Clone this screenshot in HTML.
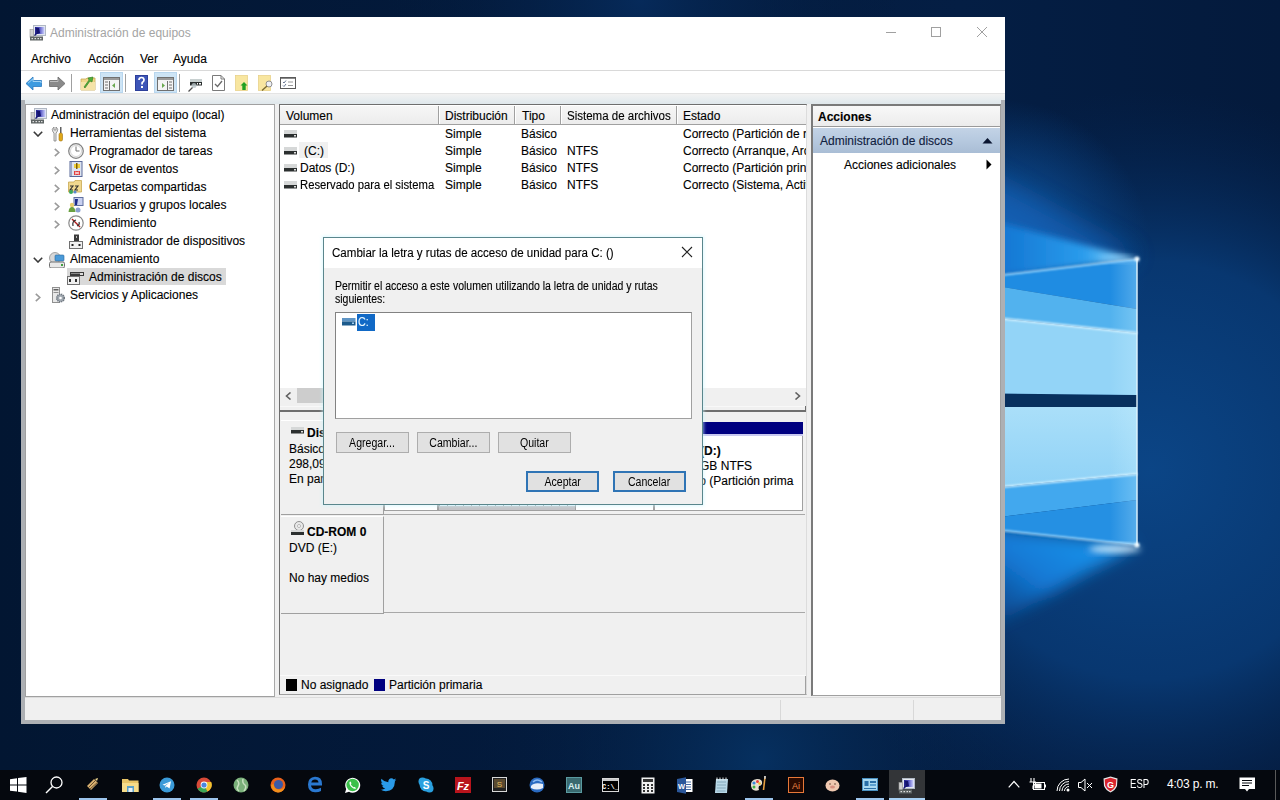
<!DOCTYPE html>
<html><head><meta charset="utf-8">
<style>
*{margin:0;padding:0;box-sizing:border-box}
html,body{width:1280px;height:800px;overflow:hidden;background:#071a3a;font-family:"Liberation Sans",sans-serif;font-size:12px;color:#000}
.a,.t,.b{position:absolute}
.t{white-space:nowrap;line-height:14px;-webkit-text-stroke:0.12px currentColor}
#wall{position:absolute;left:0;top:0}
</style></head><body>
<svg id="wall" width="1280" height="800" viewBox="0 0 1280 800">
<defs>
<radialGradient id="g1" cx="1150" cy="470" r="380" gradientUnits="userSpaceOnUse">
<stop offset="0" stop-color="#0b4586"/><stop offset="0.55" stop-color="#083770"/><stop offset="1" stop-color="#052450" stop-opacity="0"/>
</radialGradient>
<radialGradient id="g4" cx="1000" cy="250" r="150" gradientUnits="userSpaceOnUse">
<stop offset="0" stop-color="#1468be"/><stop offset="0.6" stop-color="#0d4f98" stop-opacity="0.5"/><stop offset="1" stop-color="#0a4a90" stop-opacity="0"/>
</radialGradient>
<radialGradient id="g2" cx="640" cy="0" r="260" gradientUnits="userSpaceOnUse">
<stop offset="0" stop-color="#062a5a"/><stop offset="1" stop-color="#031a3a" stop-opacity="0"/>
</radialGradient>
<radialGradient id="g5" cx="760" cy="760" r="300" gradientUnits="userSpaceOnUse">
<stop offset="0" stop-color="#063060"/><stop offset="1" stop-color="#031a3a" stop-opacity="0"/>
</radialGradient>
<linearGradient id="cone" x1="1100" y1="540" x2="1020" y2="650" gradientUnits="userSpaceOnUse">
<stop offset="0" stop-color="#1c94ec"/><stop offset="0.5" stop-color="#1478d4"/><stop offset="1" stop-color="#0c58a8" stop-opacity="0.3"/>
</linearGradient>
<linearGradient id="base" x1="0" y1="0" x2="1280" y2="0" gradientUnits="userSpaceOnUse">
<stop offset="0" stop-color="#021632"/><stop offset="0.4" stop-color="#031a3c"/><stop offset="0.75" stop-color="#041e44"/><stop offset="1" stop-color="#041a3c"/>
</linearGradient>
<linearGradient id="q1" x1="0" y1="407" x2="0" y2="490" gradientUnits="userSpaceOnUse"><stop offset="0" stop-color="#aadff9"/><stop offset="1" stop-color="#8ed1f6"/></linearGradient>
<linearGradient id="edge" x1="1110" y1="0" x2="1137" y2="0" gradientUnits="userSpaceOnUse"><stop offset="0" stop-color="#c8f0ff" stop-opacity="0"/><stop offset="1" stop-color="#c8f0ff" stop-opacity="0.3"/></linearGradient>
<linearGradient id="beam" x1="1005" y1="0" x2="1137" y2="0" gradientUnits="userSpaceOnUse"><stop offset="0" stop-color="#1478d4"/><stop offset="0.6" stop-color="#2a9cec"/><stop offset="1" stop-color="#a8e4ff"/></linearGradient>
<filter id="bl8" x="-50%" y="-50%" width="200%" height="200%"><feGaussianBlur stdDeviation="8"/></filter>
<filter id="bl3" x="-50%" y="-50%" width="200%" height="200%"><feGaussianBlur stdDeviation="3"/></filter>
<filter id="bl12" x="-50%" y="-50%" width="200%" height="200%"><feGaussianBlur stdDeviation="12"/></filter>
<filter id="bl1" x="-50%" y="-50%" width="200%" height="200%"><feGaussianBlur stdDeviation="0.8"/></filter>
</defs>
<rect width="1280" height="800" fill="url(#base)"/>
<rect width="1280" height="800" fill="url(#g2)"/>
<rect width="1280" height="800" fill="url(#g5)"/>
<rect width="1280" height="800" fill="url(#g1)"/>
<rect width="1280" height="800" fill="url(#g4)"/>
<!-- cone below logo -->
<path d="M1137 545 L950 522 L950 650Z" fill="url(#cone)" filter="url(#bl8)"/>
<!-- ray glow into top corner -->
<path d="M960 160 L1137 256 L960 285Z" fill="#1262b8" opacity="0.7" filter="url(#bl12)"/>
<path d="M960 212 L1137 259 L960 280Z" fill="url(#beam)" filter="url(#bl3)"/>
<!-- panes -->
<path d="M960 393 L1137 395 L1137 407 L960 407Z" fill="#08305e"/>
<path d="M960 280 L1137 259 L1137 309Z" fill="#1f8ce2"/>
<path d="M960 280 L1137 309 L1137 333 L960 314Z" fill="#52b2ee"/>
<path d="M960 314 L1137 333 L1137 395 L960 393Z" fill="#93d4f7"/>
<path d="M960 407 L1137 407 L1137 474 L960 491Z" fill="url(#q1)"/>
<path d="M960 491 L1137 474 L1137 500 L960 522Z" fill="#42a8ee"/>
<path d="M960 522 L1137 500 L1137 545 L960 526Z" fill="#2590e3"/>
<!-- streaks -->
<path d="M960 280 L1137 259" stroke="#bfe8ff" stroke-width="1.4" filter="url(#bl1)"/>
<path d="M960 314 L1137 333" stroke="#e0f6ff" stroke-width="1.8" filter="url(#bl1)"/>
<path d="M960 491 L1137 474" stroke="#e0f6ff" stroke-width="1.8" filter="url(#bl1)"/>
<path d="M960 526 L1137 545" stroke="#bfe8ff" stroke-width="1.4" filter="url(#bl1)"/>
<path d="M1137 259 L1137 545" stroke="#e8f8ff" stroke-width="1.4"/>
<path d="M1137 259 L1137 545" stroke="#6cc8ff" stroke-width="4" opacity="0.6" filter="url(#bl3)"/>
<path d="M1110 262 L1137 259 L1137 395 L1110 395Z" fill="url(#edge)"/><path d="M1110 407 L1137 407 L1137 545 L1110 542Z" fill="url(#edge)"/>
<circle cx="1137" cy="259" r="2.5" fill="#f4fcff" filter="url(#bl1)"/>
<circle cx="1137" cy="545" r="2.5" fill="#f4fcff" filter="url(#bl1)"/>
<ellipse cx="1115" cy="549" rx="26" ry="4" fill="#e0f4ff" opacity="0.8" filter="url(#bl3)"/>
<ellipse cx="1118" cy="259" rx="20" ry="3" fill="#a0d8ff" opacity="0.4" filter="url(#bl3)"/>
</svg>

<!-- window frame -->
<div class="a" style="left:21px;top:17px;width:984px;height:707px;background:#adb0b4"></div>
<!-- title+menu+toolbar white -->
<div class="a" style="left:21px;top:17px;width:984px;height:76px;background:#fff"></div>
<div class="a" style="left:21px;top:70px;width:984px;height:1px;background:#d9d9d9"></div>

<!-- title bar -->
<svg class="a" style="left:29px;top:24px" width="17" height="17" viewBox="0 0 17 17"><rect x="4.5" y="1.5" width="12" height="10" fill="#e4e8f0" stroke="#b0b8c4"/><rect x="6" y="3" width="9.5" height="7" fill="url(#scr)"/><path d="M7 4 L10 4 L11 9 L8 10 L6 12 L5 11 L7.5 9Z" fill="#14146e"/><rect x="1" y="5.5" width="3.5" height="8" fill="#d0d0d0" stroke="#9a9a9a" stroke-width="0.6"/><rect x="1" y="12.5" width="13" height="4" fill="#5e6464"/><rect x="2.5" y="14" width="1.5" height="1.2" fill="#e0e0e0"/><rect x="5.5" y="14" width="1.5" height="1.2" fill="#e0e0e0"/><rect x="8.5" y="14" width="1.5" height="1.2" fill="#e0e0e0"/><rect x="11" y="14" width="1.5" height="1.2" fill="#e0e0e0"/></svg>
<div class="t" style="left:50px;top:26px;color:#a4a4a4;font-size:12px;-webkit-text-stroke:0">Administración de equipos</div>
<div class="a" style="left:886px;top:32px;width:10px;height:1px;background:#a0a0a0"></div>
<div class="a" style="left:931px;top:27px;width:10px;height:10px;border:1px solid #a0a0a0"></div>
<svg class="a" style="left:976px;top:26px" width="12" height="12" viewBox="0 0 12 12"><path d="M1 1L11 11M11 1L1 11" stroke="#a0a0a0" stroke-width="1"/></svg>
<!-- menu -->
<div class="t" style="left:31px;top:52px">Archivo</div>
<div class="t" style="left:88px;top:52px">Acción</div>
<div class="t" style="left:140px;top:52px">Ver</div>
<div class="t" style="left:173px;top:52px">Ayuda</div>

<!-- toolbar -->
<svg class="a" style="left:25px;top:76px" width="18" height="15" viewBox="0 0 18 15">
<path d="M1 7.5 L8 1 L8 4.5 L16.5 4.5 L16.5 10.5 L8 10.5 L8 14 Z" fill="#3d9be0" stroke="#2a78c0" stroke-width="0.8"/>
<path d="M3 7.2 L8 2.8 L8 5.5 L16 5.5 L16 7" fill="none" stroke="#9fd3f5" stroke-width="1"/>
</svg>
<svg class="a" style="left:48px;top:76px" width="18" height="15" viewBox="0 0 18 15">
<path d="M17 7.5 L10 1 L10 4.5 L1.5 4.5 L1.5 10.5 L10 10.5 L10 14 Z" fill="#8a8a8a" stroke="#6a6a6a" stroke-width="0.8"/>
<path d="M2 5.5 L10 5.5 L10 3" fill="none" stroke="#bdbdbd" stroke-width="1"/>
</svg>
<div class="a" style="left:71px;top:74px;width:1px;height:18px;background:#a0a0a0"></div>
<svg class="a" style="left:80px;top:75px" width="16" height="16" viewBox="0 0 16 16">
<path d="M1 4 L6 4 L7 3 L15 3 L15 15 L1 15Z" fill="#f0d68a" stroke="#c8a850" stroke-width="0.8"/>
<path d="M1 7 L15 7 L15 15 L1 15Z" fill="#f5e3a8"/>
<path d="M4 12 L9 5 L8 3 L13 2 L12 7 L10 6 L5 13Z" fill="#4fae3a" stroke="#2f7a20" stroke-width="0.6"/>
</svg>
<div class="a" style="left:100px;top:72px;width:23px;height:21px;background:#cde4f5;border:1px solid #b8d6ee"></div>
<svg class="a" style="left:103px;top:77px" width="17" height="14" viewBox="0 0 17 14">
<rect x="0.5" y="0.5" width="16" height="13" fill="#f4f4f4" stroke="#707070"/>
<rect x="1" y="1" width="15" height="2" fill="#9a9a9a"/>
<path d="M2 5h3M2 8h3M2 11h3" stroke="#707070"/>
<path d="M6.5 4v9" stroke="#707070"/>
<path d="M12 6 L9 8.5 L12 11Z" fill="#6aa84f"/>
</svg>
<div class="a" style="left:125px;top:74px;width:1px;height:18px;background:#a0a0a0"></div>
<svg class="a" style="left:135px;top:75px" width="13" height="16" viewBox="0 0 13 16">
<rect x="0" y="0" width="13" height="16" fill="#2d3f9a"/>
<rect x="1" y="1" width="11" height="14" fill="#3d55b8"/>
<path d="M4 5 Q4 2.5 6.5 2.5 Q9 2.5 9 5 Q9 6.5 7.2 7.5 L7 9.5" fill="none" stroke="#fff" stroke-width="1.7"/>
<rect x="6" y="11" width="2" height="2" fill="#fff"/>
</svg>
<div class="a" style="left:154px;top:72px;width:23px;height:21px;background:#cde4f5;border:1px solid #b8d6ee"></div>
<svg class="a" style="left:157px;top:77px" width="17" height="14" viewBox="0 0 17 14">
<rect x="0.5" y="0.5" width="16" height="13" fill="#f4f4f4" stroke="#707070"/>
<rect x="1" y="1" width="15" height="2" fill="#9a9a9a"/>
<path d="M12 5h3M12 8h3M12 11h3" stroke="#707070"/>
<path d="M10.5 4v9" stroke="#707070"/>
<path d="M5 6 L8 8.5 L5 11Z" fill="#6aa84f"/>
</svg>
<div class="a" style="left:179px;top:74px;width:1px;height:18px;background:#a0a0a0"></div>
<svg class="a" style="left:188px;top:78px" width="15" height="14" viewBox="0 0 15 14"><rect x="2" y="1" width="12" height="3" fill="#c8d0d0"/><rect x="2" y="4" width="12" height="3.5" fill="#2a2e2e"/><rect x="9" y="5" width="1" height="1.5" fill="#fff"/><rect x="11" y="5" width="2" height="1.5" fill="#fff"/><circle cx="6" cy="7.5" r="2.5" fill="#b8c4c8" opacity="0.8"/><path d="M4.5 9.5 L0.5 13.5" stroke="#505050" stroke-width="1.3"/></svg>
<svg class="a" style="left:212px;top:75px" width="13" height="16" viewBox="0 0 13 16">
<path d="M0.5 0.5 L9 0.5 L12.5 4 L12.5 15.5 L0.5 15.5Z" fill="#fff" stroke="#7a7a7a"/>
<path d="M9 0.5 L9 4 L12.5 4" fill="none" stroke="#7a7a7a"/>
<path d="M3 9 L5.5 11.5 L10 6" fill="none" stroke="#6a6a6a" stroke-width="1.3"/>
</svg>
<svg class="a" style="left:235px;top:75px" width="14" height="16" viewBox="0 0 14 16">
<rect x="0.5" y="0.5" width="12" height="15" fill="#f8e6a0" stroke="#e8d28a" stroke-width="0.8"/>
<path d="M9 7 L12.5 10.5 L10.7 10.5 L10.7 15 L7.3 15 L7.3 10.5 L5.5 10.5Z" fill="#22a022"/>
</svg>
<svg class="a" style="left:258px;top:75px" width="16" height="16" viewBox="0 0 16 16">
<rect x="0.5" y="0.5" width="12" height="15" fill="#f8e6a0" stroke="#e8d28a" stroke-width="0.8"/>
<circle cx="11" cy="9" r="3" fill="#eef0f4" stroke="#909090"/>
<path d="M9 11 L4 15.5" stroke="#7a6a30" stroke-width="1.4"/>
</svg>
<svg class="a" style="left:280px;top:77px" width="16" height="12" viewBox="0 0 16 12">
<rect x="0.5" y="0.5" width="15" height="11" fill="#fff" stroke="#5a5a5a"/>
<rect x="1" y="1" width="14" height="1" fill="#8a8a8a"/>
<path d="M3 5 L4 6 L6 3.5M3 8.5 L4 9.5 L6 7" fill="none" stroke="#5a6a8a" stroke-width="0.9"/>
<path d="M8 5h5M8 8.5h5" stroke="#9a9a9a"/>
</svg>
<!-- gradient band -->
<div class="a" style="left:21px;top:93px;width:984px;height:7px;background:linear-gradient(#f2f2f2,#e6ecef);border-top:1px solid #e4e4e4"></div><div class="a" style="left:25px;top:100px;width:976px;height:4px;background:linear-gradient(#e6ecef,#dfe7eb)"></div>
<!-- between-panels fill -->
<div class="a" style="left:25px;top:104px;width:976px;height:593px;background:#f0f0f0"></div>
<!-- status bar -->
<div class="a" style="left:25px;top:697px;width:976px;height:23px;background:#f0f0f0;border-top:1px solid #dcdcdc"></div>
<div class="a" style="left:780px;top:700px;width:1px;height:20px;background:#d8d8d8"></div>
<div class="a" style="left:913px;top:700px;width:1px;height:20px;background:#d8d8d8"></div>

<!-- left panel -->
<div class="a" style="left:25px;top:104px;width:250px;height:593px;background:#fff;border:1px solid #a0a0a0;border-right-color:#a8a8a8"></div>
<!-- tree -->
<div class="a" style="left:67px;top:268px;width:159px;height:17px;background:#d9d9d9"></div>
<svg class="a" style="left:30px;top:107px" width="17" height="17" viewBox="0 0 17 17"><defs><linearGradient id="scr" x1="0" y1="0" x2="1" y2="0"><stop offset="0" stop-color="#20208a"/><stop offset="0.45" stop-color="#5050c0"/><stop offset="1" stop-color="#d0d4ff"/></linearGradient></defs><rect x="4.5" y="1.5" width="12" height="10" fill="#e4e8f0" stroke="#b0b8c4"/><rect x="6" y="3" width="9.5" height="7" fill="url(#scr)"/><path d="M7 4 L10 4 L11 9 L8 10 L6 12 L5 11 L7.5 9Z" fill="#14146e"/><rect x="1" y="5.5" width="3.5" height="8" fill="#d0d0d0" stroke="#9a9a9a" stroke-width="0.6"/><rect x="1" y="12.5" width="13" height="4" fill="#5e6464"/><rect x="2.5" y="14" width="1.5" height="1.2" fill="#e0e0e0"/><rect x="5.5" y="14" width="1.5" height="1.2" fill="#e0e0e0"/><rect x="8.5" y="14" width="1.5" height="1.2" fill="#e0e0e0"/><rect x="11" y="14" width="1.5" height="1.2" fill="#e0e0e0"/></svg><div class="t" style="left:51px;top:108px;">Administración del equipo (local)</div>
<svg class="a" style="left:33px;top:131px" width="10" height="6" viewBox="0 0 10 6"><path d="M0.8 0.8 L5 5 L9.2 0.8" fill="none" stroke="#3a3a3a" stroke-width="1.6"/></svg><svg class="a" style="left:51px;top:126px" width="13" height="16" viewBox="0 0 13 16"><path d="M3 1 Q0 3 2 6 L3 7 L3 15 L5 15 L5 7 L6 6 Q8 3 5 1 L5 4 L3 4Z" fill="#e8e8e8" stroke="#808080" stroke-width="0.8"/><rect x="9" y="1" width="1.5" height="6" fill="#606060"/><rect x="8" y="7" width="3.5" height="8" rx="1.5" fill="#e0a818" stroke="#a07010" stroke-width="0.6"/></svg><div class="t" style="left:70px;top:126px;">Herramientas del sistema</div>
<svg class="a" style="left:54px;top:148px" width="6" height="9" viewBox="0 0 6 9"><path d="M0.8 0.8 L4.8 4.5 L0.8 8.2" fill="none" stroke="#9a9a9a" stroke-width="1.6"/></svg><svg class="a" style="left:68px;top:143px" width="16" height="16" viewBox="0 0 16 16"><circle cx="8" cy="8" r="7.3" fill="#f4f4f4" stroke="#808080" stroke-width="1.2"/><circle cx="8" cy="8" r="5.5" fill="#fff" stroke="#c0c0c0" stroke-width="0.6"/><path d="M8 3.5 L8 8 L11.5 8" fill="none" stroke="#707070" stroke-width="1"/></svg><div class="t" style="left:89px;top:144px;">Programador de tareas</div>
<svg class="a" style="left:54px;top:166px" width="6" height="9" viewBox="0 0 6 9"><path d="M0.8 0.8 L4.8 4.5 L0.8 8.2" fill="none" stroke="#9a9a9a" stroke-width="1.6"/></svg><svg class="a" style="left:68px;top:161px" width="16" height="16" viewBox="0 0 16 16"><rect x="2" y="0.5" width="12" height="15" fill="#dde4f0" stroke="#5a6a9a"/><path d="M3 2h1M3 4h1M3 6h1M3 8h1M3 10h1M3 12h1M3 14h1" stroke="#5a6a9a"/><rect x="6" y="3" width="6" height="4" fill="#f0d040"/><rect x="8" y="2" width="1.5" height="6" fill="#806000"/><rect x="6" y="10" width="6" height="4" fill="#e04040"/><path d="M7 11 L11 13M11 11 L7 13" stroke="#fff" stroke-width="0.8"/></svg><div class="t" style="left:89px;top:162px;">Visor de eventos</div>
<svg class="a" style="left:54px;top:184px" width="6" height="9" viewBox="0 0 6 9"><path d="M0.8 0.8 L4.8 4.5 L0.8 8.2" fill="none" stroke="#9a9a9a" stroke-width="1.6"/></svg><svg class="a" style="left:68px;top:179px" width="16" height="16" viewBox="0 0 16 16"><path d="M0.5 3 L6 3 L7 1.5 L13.5 1.5 L13.5 13 L0.5 13Z" fill="#f0d890" stroke="#c8a850" stroke-width="0.8"/><path d="M2 7 h3 l-3 4 h3 M7 7 h3 l-3 4 h3" fill="none" stroke="#303030" stroke-width="1.1"/><circle cx="3" cy="13" r="2" fill="#3aaa5a"/><circle cx="7" cy="13" r="1.6" fill="#5a8ad0"/></svg><div class="t" style="left:89px;top:180px;">Carpetas compartidas</div>
<svg class="a" style="left:54px;top:202px" width="6" height="9" viewBox="0 0 6 9"><path d="M0.8 0.8 L4.8 4.5 L0.8 8.2" fill="none" stroke="#9a9a9a" stroke-width="1.6"/></svg><svg class="a" style="left:68px;top:197px" width="16" height="16" viewBox="0 0 16 16"><rect x="6" y="0.5" width="9" height="8" fill="#c8d0f0" stroke="#6070a0"/><path d="M7 2 L10 2 L9 8 L7 8Z" fill="#1a2a8a"/><circle cx="4" cy="8" r="2.2" fill="#e8d070"/><path d="M0.5 15 Q1 10 4 10 Q7 10 7.5 15Z" fill="#6aa040"/><circle cx="10" cy="13" r="2.5" fill="#8aa0d0"/></svg><div class="t" style="left:89px;top:198px;">Usuarios y grupos locales</div>
<svg class="a" style="left:54px;top:220px" width="6" height="9" viewBox="0 0 6 9"><path d="M0.8 0.8 L4.8 4.5 L0.8 8.2" fill="none" stroke="#9a9a9a" stroke-width="1.6"/></svg><svg class="a" style="left:68px;top:215px" width="16" height="16" viewBox="0 0 16 16"><circle cx="8" cy="8" r="7.2" fill="#fff" stroke="#8a8a8a" stroke-width="1.2"/><path d="M4 4 L12 12" stroke="#b02020" stroke-width="1.5"/><path d="M5 11 Q4 6 8 5 M9 11 Q12 10 11 7" fill="none" stroke="#303030" stroke-width="1.2"/></svg><div class="t" style="left:89px;top:216px;">Rendimiento</div>
<svg class="a" style="left:69px;top:234px" width="14" height="15" viewBox="0 0 14 15"><rect x="5" y="0.5" width="5" height="7" fill="#3a3a3a"/><rect x="7" y="2" width="1" height="2" fill="#bbb"/><rect x="0.5" y="7.5" width="13" height="7" fill="#f0f0f0" stroke="#707070"/><rect x="2.5" y="10" width="2" height="2" fill="#202020"/><rect x="9.5" y="10" width="2" height="2" fill="#202020"/></svg><div class="t" style="left:89px;top:234px;">Administrador de dispositivos</div>
<svg class="a" style="left:33px;top:257px" width="10" height="6" viewBox="0 0 10 6"><path d="M0.8 0.8 L5 5 L9.2 0.8" fill="none" stroke="#3a3a3a" stroke-width="1.6"/></svg><svg class="a" style="left:49px;top:252px" width="16" height="16" viewBox="0 0 16 16"><circle cx="6" cy="6" r="5.5" fill="#d8d8d8" stroke="#909090" stroke-width="0.8"/><rect x="6" y="3" width="9" height="6" rx="1" fill="#4a9ad8" stroke="#2a6aa0" stroke-width="0.6"/><rect x="0.5" y="10" width="15" height="6" rx="1.5" fill="#e8e8e8" stroke="#707070"/><rect x="12" y="12" width="2" height="2" fill="#40a040"/></svg><div class="t" style="left:70px;top:252px;">Almacenamiento</div>
<svg class="a" style="left:67px;top:269px" width="18" height="17" viewBox="0 0 18 17"><rect x="3" y="3" width="14" height="4" fill="#3a3a3a"/><rect x="4" y="4" width="10" height="1" fill="#8a8a8a"/><rect x="13" y="4" width="3" height="2" fill="#ddd"/><rect x="0.5" y="7.5" width="12" height="8" fill="#f0f0f0" stroke="#707070"/><rect x="2" y="10" width="2" height="3" fill="#303030"/><rect x="8" y="10" width="2" height="3" fill="#303030"/></svg><div class="t" style="left:89px;top:270px;">Administración de discos</div>
<svg class="a" style="left:35px;top:293px" width="6" height="9" viewBox="0 0 6 9"><path d="M0.8 0.8 L4.8 4.5 L0.8 8.2" fill="none" stroke="#9a9a9a" stroke-width="1.6"/></svg><svg class="a" style="left:50px;top:287px" width="15" height="16" viewBox="0 0 15 16"><rect x="2.5" y="0.5" width="7" height="15" fill="#e8e8e8" stroke="#909090"/><rect x="3.5" y="2" width="5" height="1.5" fill="#606060"/><rect x="3.5" y="5" width="5" height="1" fill="#909090"/><circle cx="10.5" cy="11" r="3.8" fill="#a0a8b0" stroke="#707880" stroke-dasharray="1.2 0.8" stroke-width="1.6"/><circle cx="10.5" cy="11" r="1.3" fill="#fff"/></svg><div class="t" style="left:70px;top:288px;">Servicios y Aplicaciones</div>
<!-- middle panel -->
<div class="a" style="left:279px;top:104px;width:528px;height:591px;background:#f0f0f0;border:1px solid #a0a0a0;border-right-color:#dcdcdc;border-left:1px solid #6e6e6e;border-top:2px solid #6e6e6e"></div><div class="a" style="left:805px;top:675px;width:1px;height:20px;background:#a0a0a0"></div>
<!-- list view -->
<div class="a" style="left:280px;top:105px;width:526px;height:306px;background:#fff"></div>
<div class="a" style="left:280px;top:106px;width:526px;height:19px;background:linear-gradient(#f6f6f6,#ececec);border-bottom:1px solid #a0a0a0"></div>
<div class="a" style="left:438px;top:106px;width:1px;height:18px;background:#a0a0a0"></div><div class="a" style="left:439px;top:106px;width:1px;height:18px;background:#fff"></div>
<div class="a" style="left:514px;top:106px;width:1px;height:18px;background:#a0a0a0"></div><div class="a" style="left:515px;top:106px;width:1px;height:18px;background:#fff"></div>
<div class="a" style="left:560px;top:106px;width:1px;height:18px;background:#a0a0a0"></div><div class="a" style="left:561px;top:106px;width:1px;height:18px;background:#fff"></div>
<div class="a" style="left:676px;top:106px;width:1px;height:18px;background:#a0a0a0"></div><div class="a" style="left:677px;top:106px;width:1px;height:18px;background:#fff"></div>
<div class="t" style="left:286px;top:109px;">Volumen</div>
<div class="t" style="left:445px;top:109px;">Distribución</div>
<div class="t" style="left:522px;top:109px;">Tipo</div>
<div class="t" style="left:567px;top:109px;transform:scaleX(0.96);transform-origin:0 0">Sistema de archivos</div>
<div class="t" style="left:683px;top:109px;">Estado</div>
<div class="a" style="left:299px;top:142px;width:29px;height:16px;background:#f0f0f0"></div>
<div class="a" style="left:280px;top:126px;width:526px;height:262px;overflow:hidden">
<svg class="a" style="left:4px;top:4px" width="13" height="8" viewBox="0 0 13 8"><rect x="0" y="0" width="13" height="4" fill="#d6d8d8"/><rect x="0" y="4" width="13" height="3.5" fill="#2b2f2f"/><rect x="10" y="5" width="2" height="1.5" fill="#e0e0e0"/></svg><div class="t" style="left:165px;top:1px;">Simple</div><div class="t" style="left:241px;top:1px;">Básico</div><div class="t" style="left:403px;top:1px;">Correcto (Partición de r</div>
<svg class="a" style="left:4px;top:21px" width="13" height="8" viewBox="0 0 13 8"><rect x="0" y="0" width="13" height="4" fill="#d6d8d8"/><rect x="0" y="4" width="13" height="3.5" fill="#2b2f2f"/><rect x="10" y="5" width="2" height="1.5" fill="#e0e0e0"/></svg><div class="t" style="left:24px;top:18px;">(C:)</div><div class="t" style="left:165px;top:18px;">Simple</div><div class="t" style="left:241px;top:18px;">Básico</div><div class="t" style="left:287px;top:18px;">NTFS</div><div class="t" style="left:403px;top:18px;">Correcto (Arranque, Arc</div>
<svg class="a" style="left:4px;top:38px" width="13" height="8" viewBox="0 0 13 8"><rect x="0" y="0" width="13" height="4" fill="#d6d8d8"/><rect x="0" y="4" width="13" height="3.5" fill="#2b2f2f"/><rect x="10" y="5" width="2" height="1.5" fill="#e0e0e0"/></svg><div class="t" style="left:20px;top:35px;">Datos (D:)</div><div class="t" style="left:165px;top:35px;">Simple</div><div class="t" style="left:241px;top:35px;">Básico</div><div class="t" style="left:287px;top:35px;">NTFS</div><div class="t" style="left:403px;top:35px;">Correcto (Partición prin</div>
<svg class="a" style="left:4px;top:55px" width="13" height="8" viewBox="0 0 13 8"><rect x="0" y="0" width="13" height="4" fill="#d6d8d8"/><rect x="0" y="4" width="13" height="3.5" fill="#2b2f2f"/><rect x="10" y="5" width="2" height="1.5" fill="#e0e0e0"/></svg><div class="t" style="left:20px;top:52px;transform:scaleX(0.94);transform-origin:0 0">Reservado para el sistema</div><div class="t" style="left:165px;top:52px;">Simple</div><div class="t" style="left:241px;top:52px;">Básico</div><div class="t" style="left:287px;top:52px;">NTFS</div><div class="t" style="left:403px;top:52px;">Correcto (Sistema, Activ</div>
</div>
<div class="a" style="left:280px;top:388px;width:526px;height:22px;background:#f0f0f0"></div>
<div class="a" style="left:297px;top:388px;width:220px;height:15px;background:#cdcdcd"></div>
<svg class="a" style="left:285px;top:392px" width="7" height="8" viewBox="0 0 7 8"><path d="M5.5 0.5 L1.5 4 L5.5 7.5" fill="none" stroke="#606060" stroke-width="1.6"/></svg>
<svg class="a" style="left:794px;top:392px" width="7" height="8" viewBox="0 0 7 8"><path d="M1.5 0.5 L5.5 4 L1.5 7.5" fill="none" stroke="#606060" stroke-width="1.6"/></svg>
<div class="a" style="left:280px;top:406px;width:526px;height:1px;background:#f8f8f8"></div>
<div class="a" style="left:280px;top:410px;width:526px;height:2px;background:#6e6e6e"></div>
<div class="a" style="left:805px;top:406px;width:1px;height:5px;background:#6e6e6e"></div>
<!-- disk area -->
<div class="a" style="left:281px;top:420px;width:103px;height:95px;background:#f0f0f0;border-right:1px solid #a0a0a0;border-bottom:1px solid #a0a0a0;border-top:1px solid #fff"></div>
<svg class="a" style="left:291px;top:427px" width="14" height="8" viewBox="0 0 14 8"><rect x="0" y="0" width="13" height="3" fill="#d6d8d8"/><rect x="0" y="3" width="13" height="3.5" fill="#2b2f2f"/><rect x="10" y="4" width="2" height="1.5" fill="#e0e0e0"/></svg>
<div class="t" style="left:307px;top:426px;font-weight:bold">Disco 0</div><div class="t" style="left:289px;top:442px;">Básico</div><div class="t" style="left:289px;top:457px;">298,09 GB</div><div class="t" style="left:289px;top:472px;">En pantalla</div>
<div class="a" style="left:384px;top:420px;width:421px;height:95px;background:#f0f0f0;border-bottom:1px solid #a0a0a0"></div>
<div class="a" style="left:384px;top:422px;width:54px;height:89px;background:#fff;border:1px solid #a0a0a0;border-top:none"></div>
<div class="a" style="left:384px;top:422px;width:54px;height:14px;background:#000080;border-bottom:2px solid #c8c8f0"></div>
<div class="a" style="left:438px;top:422px;width:137px;height:89px;background:#fff;border:1px solid #a0a0a0;border-top:none"></div>
<div class="a" style="left:438px;top:422px;width:137px;height:14px;background:#000080;border-bottom:2px solid #c8c8f0"></div>
<div class="a" style="left:575px;top:422px;width:79px;height:89px;background:#fff;border:1px solid #a0a0a0;border-top:none"></div>
<div class="a" style="left:575px;top:422px;width:79px;height:14px;background:#000080;border-bottom:2px solid #c8c8f0"></div>
<div class="a" style="left:654px;top:422px;width:149px;height:89px;background:#fff;border:1px solid #a0a0a0;border-top:none"></div>
<div class="a" style="left:654px;top:422px;width:149px;height:14px;background:#000080;border-bottom:2px solid #c8c8f0"></div>
<div class="a" style="left:439px;top:438px;width:136px;height:72px;background:#c4c4c8"></div><div class="a" style="left:439px;top:505px;width:136px;height:1px;background:repeating-linear-gradient(90deg,#9aa4a8 0 1px,#e4f4fa 1px 8px)"></div>
<div class="t" style="left:660px;top:444px;font-weight:bold">Datos&nbsp; (D:)</div><div class="t" style="left:660px;top:459px;">100,00 GB NTFS</div><div class="t" style="left:660px;top:474px;">Correcto (Partición prima</div>
<div class="a" style="left:281px;top:516px;width:103px;height:98px;background:#f0f0f0;border-right:1px solid #a0a0a0;border-bottom:1px solid #a0a0a0;border-top:1px solid #fff"></div>
<div class="a" style="left:384px;top:514px;width:421px;height:99px;background:#f0f0f0;border-top:1px solid #a8a8a8;border-bottom:1px solid #a8a8a8"></div>
<svg class="a" style="left:291px;top:521px" width="14" height="15" viewBox="0 0 14 15"><circle cx="8" cy="5" r="4.5" fill="#e8e8e8" stroke="#909090"/><circle cx="8" cy="5" r="1.5" fill="#fff" stroke="#909090" stroke-width="0.6"/><rect x="0" y="9" width="13" height="2" fill="#d6d8d8"/><rect x="0" y="11" width="13" height="3" fill="#2b2f2f"/></svg>
<div class="t" style="left:307px;top:525px;font-weight:bold">CD-ROM 0</div><div class="t" style="left:289px;top:541px;">DVD (E:)</div><div class="t" style="left:289px;top:571px;">No hay medios</div>
<div class="a" style="left:280px;top:675px;width:526px;height:1px;background:#fafafa"></div>
<div class="a" style="left:286px;top:679px;width:11px;height:12px;background:#000"></div><div class="t" style="left:301px;top:678px;">No asignado</div>
<div class="a" style="left:374px;top:679px;width:11px;height:12px;background:#000080"></div><div class="t" style="left:389px;top:678px;">Partición primaria</div>
<!-- right panel -->
<div class="a" style="left:811px;top:104px;width:190px;height:592px;background:#fff;border:1px solid #a0a0a0;border-left:2px solid #7a7a7a;border-top:2px solid #7a7a7a"></div>

<!-- actions -->
<div class="a" style="left:813px;top:106px;width:187px;height:21px;background:linear-gradient(#f8f8f8,#ececec);border-bottom:1px solid #9a9a9a"></div>
<div class="t" style="left:818px;top:110px;font-weight:bold">Acciones</div>
<div class="a" style="left:813px;top:128px;width:187px;height:25px;background:linear-gradient(#c3d3e6,#b6c9df 50%,#a9bdd5)"></div>
<div class="t" style="left:820px;top:134px;color:#102040">Administración de discos</div>
<svg class="a" style="left:982px;top:137px" width="11" height="7" viewBox="0 0 11 7"><path d="M0.5 6.5 L5.5 1 L10.5 6.5Z" fill="#0a1530"/></svg>
<div class="t" style="left:844px;top:158px;">Acciones adicionales</div>
<svg class="a" style="left:986px;top:159px" width="6" height="11" viewBox="0 0 6 11"><path d="M0.5 0.5 L5.5 5.5 L0.5 10.5Z" fill="#000"/></svg>
<!-- dialog -->
<div class="a" style="left:323px;top:237px;width:380px;height:268px;background:#f0f0f0;border:1px solid #5a868c;box-shadow:0 0 3px 1px rgba(200,245,255,0.6)"></div>
<div class="a" style="left:324px;top:238px;width:378px;height:30px;background:#fff"></div>
<div class="t" style="left:332px;top:246px;font-size:12px;transform:scaleX(0.964);transform-origin:0 0">Cambiar la letra y rutas de acceso de unidad para C: ()</div>
<svg class="a" style="left:681px;top:246px" width="12" height="12" viewBox="0 0 12 12"><path d="M1 1L11 11M11 1L1 11" stroke="#222" stroke-width="1.1"/></svg>
<div class="t" style="left:335px;top:280px;font-size:12px;line-height:13px;transform:scaleX(0.875);transform-origin:0 0">Permitir el acceso a este volumen utilizando la letra de unidad y rutas<br>siguientes:</div>
<div class="a" style="left:335px;top:312px;width:357px;height:107px;background:#fff;border:1px solid #a0a0a0;border-top-color:#828282;border-left-color:#828282"></div>
<svg class="a" style="left:342px;top:318px" width="14" height="8" viewBox="0 0 14 8"><rect x="0" y="0" width="13.5" height="3.5" fill="#5e94c4"/><rect x="0" y="3.5" width="13.5" height="4" fill="#1c5a8c"/><rect x="10" y="4.5" width="2" height="1.5" fill="#a8d0f0"/></svg>
<div class="a" style="left:357px;top:314px;width:18px;height:17px;background:#1169c6"></div>
<div class="t" style="left:358px;top:315px;color:#e6f6ff;font-size:12px;line-height:15px;transform:scaleX(0.9);transform-origin:0 0">C:</div>
<div class="a" style="left:336px;top:432px;width:73px;height:21px;background:#e1e1e1;border:1px solid #adadad;text-align:center;line-height:20px;font-size:12px;white-space:nowrap"><span style="display:inline-block;transform:scaleX(0.88)">Agregar...</span></div>
<div class="a" style="left:417px;top:432px;width:73px;height:21px;background:#e1e1e1;border:1px solid #adadad;text-align:center;line-height:20px;font-size:12px;white-space:nowrap"><span style="display:inline-block;transform:scaleX(0.88)">Cambiar...</span></div>
<div class="a" style="left:498px;top:432px;width:73px;height:21px;background:#e1e1e1;border:1px solid #adadad;text-align:center;line-height:20px;font-size:12px;white-space:nowrap"><span style="display:inline-block;transform:scaleX(0.88)">Quitar</span></div>
<div class="a" style="left:526px;top:471px;width:73px;height:21px;background:#e1e1e1;border:2px solid #2f74b5;text-align:center;line-height:18px;font-size:12px;white-space:nowrap"><span style="display:inline-block;transform:scaleX(0.88)">Aceptar</span></div>
<div class="a" style="left:613px;top:471px;width:73px;height:21px;background:#e1e1e1;border:2px solid #2f74b5;text-align:center;line-height:18px;font-size:12px;white-space:nowrap"><span style="display:inline-block;transform:scaleX(0.88)">Cancelar</span></div>

<!-- taskbar -->
<div class="a" style="left:0;top:770px;width:1280px;height:30px;background:#05080e"></div>
<div class="a" style="left:889px;top:770px;width:36px;height:30px;background:#333538"></div>
<!-- underlines -->
<div class="a" style="left:79px;top:798px;width:28px;height:2px;background:#9cc4ec"></div>
<div class="a" style="left:153px;top:798px;width:28px;height:2px;background:#9cc4ec"></div>
<div class="a" style="left:190px;top:798px;width:28px;height:2px;background:#9cc4ec"></div>
<div class="a" style="left:745px;top:798px;width:28px;height:2px;background:#9cc4ec"></div>
<div class="a" style="left:856px;top:798px;width:28px;height:2px;background:#9cc4ec"></div>
<div class="a" style="left:889px;top:798px;width:36px;height:2px;background:#a8d0f4"></div>
<!-- start -->
<svg class="a" style="left:10px;top:777px" width="17" height="16" viewBox="0 0 17 16"><path d="M0 2.3 L7 1.3 L7 7.4 L0 7.4Z M8 1.1 L16.5 0 L16.5 7.4 L8 7.4Z M0 8.4 L7 8.4 L7 14.6 L0 13.7Z M8 8.4 L16.5 8.4 L16.5 16 L8 14.8Z" fill="#fff"/></svg>
<!-- search -->
<svg class="a" style="left:45px;top:776px" width="19" height="18" viewBox="0 0 19 18"><circle cx="11.5" cy="6.5" r="5.5" fill="none" stroke="#fff" stroke-width="1.3"/><path d="M7.5 10.5 L1 17" stroke="#fff" stroke-width="1.4"/></svg>
<!-- app3 -->
<svg class="a" style="left:85px;top:777px" width="15" height="15" viewBox="0 0 15 15"><path d="M2 9 L9 2 L13 6 L6 13Z" fill="#d8b070"/><path d="M3 11 L11 3M5 12 L13 5" stroke="#6a5030" stroke-width="1"/><path d="M10 2 L13 1 L12 4" fill="#f0d890"/></svg>
<!-- explorer -->
<svg class="a" style="left:122px;top:778px" width="17" height="14" viewBox="0 0 17 14"><path d="M0 1 L6 1 L7 2.5 L16.5 2.5 L16.5 14 L0 14Z" fill="#e8c466"/><rect x="0" y="5" width="16.5" height="9" fill="#f6dc8a"/><rect x="5" y="8" width="7" height="6" fill="#5aa0c8"/><rect x="6.5" y="10" width="4" height="4" fill="#e8f0f4"/></svg>
<!-- telegram -->
<svg class="a" style="left:159px;top:777px" width="16" height="16" viewBox="0 0 16 16"><circle cx="8" cy="8" r="7.5" fill="#3a9ad8"/><path d="M3.5 7.8 L12 4.3 L10.6 11.6 L7.6 9.6 L6.5 11 L6.3 9 L10.5 5.5 L5.6 8.6Z" fill="#fff"/></svg>
<!-- chrome -->
<svg class="a" style="left:196px;top:777px" width="16" height="16" viewBox="0 0 16 16"><circle cx="8" cy="8" r="7.5" fill="#d84a38"/><path d="M8 8 L1.5 11.8 A7.5 7.5 0 0 0 11.5 14.6Z" fill="#3aa757"/><path d="M8 8 L11.5 14.6 A7.5 7.5 0 0 0 15.3 5 L8 5Z" fill="#f2c230"/><circle cx="8" cy="8" r="3.4" fill="#fff"/><circle cx="8" cy="8" r="2.6" fill="#4a86e0"/></svg>
<!-- globe -->
<svg class="a" style="left:233px;top:777px" width="16" height="16" viewBox="0 0 16 16"><circle cx="8" cy="8" r="7.5" fill="#7ab07a"/><path d="M4 3 Q7 6 5 9 Q3 12 6 14 M10 2 Q9 6 12 8 Q14 10 11 14" fill="none" stroke="#c8e0c0" stroke-width="1.5"/></svg>
<!-- firefox -->
<svg class="a" style="left:270px;top:777px" width="16" height="16" viewBox="0 0 16 16"><circle cx="8" cy="8" r="7.5" fill="#e8601c"/><circle cx="8.5" cy="7.5" r="4.5" fill="#3a5aa8"/><path d="M1 8 Q2 15 8 15.5 Q14 15 15 9 Q13 13 8.5 12.5 Q4 12 3.5 7 Z" fill="#f0901c"/></svg>
<!-- edge -->
<svg class="a" style="left:307px;top:776px" width="16" height="17" viewBox="0 0 16 17"><path d="M15 9.5 L4 9.5 Q4.5 13 8.5 13.2 Q11.5 13.3 14 11.8 L14 15 Q11.5 16.5 8 16.3 Q1 16 1 8.5 Q1 1.5 8 0.8 Q15 0.7 15 8Z M4.3 6.5 L11.5 6.5 Q11.3 3.6 8 3.5 Q4.8 3.6 4.3 6.5Z" fill="#2a78d0"/></svg>
<!-- whatsapp -->
<svg class="a" style="left:344px;top:777px" width="17" height="17" viewBox="0 0 17 17"><path d="M1 16 L2.2 12 A7.5 7.5 0 1 1 5 14.8Z" fill="#fff"/><circle cx="8.6" cy="8" r="6.2" fill="#3ac04a"/><path d="M5.5 5 Q5 8 8 10.5 Q10.5 12.5 12 11.5 L11 10 L9.5 10.3 Q7.5 9 6.8 7.3 L7.5 6.3 L6.6 4.6Z" fill="#fff"/></svg>
<!-- twitter -->
<svg class="a" style="left:380px;top:778px" width="17" height="14" viewBox="0 0 17 14"><path d="M16.5 1.8 Q15.5 2.3 14.6 2.4 Q15.6 1.6 15.9 0.6 Q14.9 1.2 13.8 1.4 Q12.8 0.3 11.4 0.3 Q8.5 0.5 8.3 3.5 L8.4 4.2 Q4.2 4 1.3 0.7 Q0.3 3 2.4 5 Q1.6 5 1 4.6 Q1.2 7.2 3.6 7.9 Q2.8 8.1 2.2 7.9 Q3 10 5.3 10.2 Q3.3 11.9 0.5 11.6 Q3 13.3 6 13.2 Q14.6 12.7 14.9 3.7 L14.9 3.3 Q15.8 2.7 16.5 1.8Z" fill="#2a9ae8"/></svg>
<!-- skype -->
<svg class="a" style="left:418px;top:777px" width="16" height="16" viewBox="0 0 16 16"><circle cx="4.5" cy="4.5" r="4" fill="#2aa0e0"/><circle cx="11.5" cy="11.5" r="4" fill="#2aa0e0"/><circle cx="8" cy="8" r="6.4" fill="#2aa0e0"/><text x="8" y="11.8" font-size="10" font-weight="bold" fill="#fff" text-anchor="middle" font-family="Liberation Sans">S</text></svg>
<!-- filezilla -->
<svg class="a" style="left:455px;top:777px" width="16" height="16" viewBox="0 0 16 16"><rect width="16" height="16" fill="#b8141c"/><text x="8" y="12.5" font-size="11" font-weight="bold" font-style="italic" fill="#fff" text-anchor="middle" font-family="Liberation Sans">Fz</text></svg>
<!-- S app -->
<svg class="a" style="left:492px;top:777px" width="15" height="15" viewBox="0 0 15 15"><rect x="0.5" y="0.5" width="14" height="14" fill="#222" stroke="#d8d8d8"/><rect x="2" y="2" width="11" height="9" fill="#5a4a30"/><text x="7.5" y="9.8" font-size="8" fill="#e8c060" text-anchor="middle" font-family="Liberation Sans">S</text></svg>
<!-- thunderbird -->
<svg class="a" style="left:529px;top:777px" width="16" height="16" viewBox="0 0 16 16"><circle cx="8" cy="8" r="7.5" fill="#2a6ac0"/><path d="M2 9 Q5 5 14 7 L14 11 Q8 14 2 11Z" fill="#e8eef8"/><path d="M4 5 Q8 1 13 5" fill="none" stroke="#8ab8f0" stroke-width="1.5"/></svg>
<!-- Au -->
<svg class="a" style="left:566px;top:777px" width="16" height="16" viewBox="0 0 16 16"><rect width="16" height="16" fill="#3a6a70"/><rect x="0.5" y="0.5" width="15" height="15" fill="none" stroke="#5a9aa0"/><text x="8" y="11.5" font-size="9" font-weight="bold" fill="#d8f0f0" text-anchor="middle" font-family="Liberation Sans">Au</text></svg>
<!-- cmd -->
<svg class="a" style="left:602px;top:778px" width="17" height="14" viewBox="0 0 17 14"><rect x="0.5" y="0.5" width="16" height="13" fill="#000" stroke="#d8d8d8"/><rect x="1" y="1" width="15" height="2" fill="#c8c8c8"/><text x="8.5" y="11" font-size="7" font-weight="bold" fill="#fff" text-anchor="middle" font-family="Liberation Mono">C:\_</text></svg>
<!-- calculator -->
<svg class="a" style="left:641px;top:777px" width="14" height="17" viewBox="0 0 14 17"><rect x="0.5" y="0.5" width="13" height="16" fill="#f0f0f0"/><rect x="2" y="2" width="10" height="3" fill="#333"/><g fill="#333"><rect x="2" y="7" width="2" height="2"/><rect x="6" y="7" width="2" height="2"/><rect x="10" y="7" width="2" height="2"/><rect x="2" y="10" width="2" height="2"/><rect x="6" y="10" width="2" height="2"/><rect x="10" y="10" width="2" height="2"/><rect x="2" y="13" width="2" height="2"/><rect x="6" y="13" width="2" height="2"/><rect x="10" y="13" width="2" height="2"/></g></svg>
<!-- word -->
<svg class="a" style="left:677px;top:777px" width="16" height="17" viewBox="0 0 16 17"><rect x="6" y="2" width="9.5" height="13" fill="#fff"/><path d="M8 5h6M8 7.5h6M8 10h6M8 12.5h6" stroke="#2b579a" stroke-width="0.9"/><path d="M0 2 L9 0.3 L9 16.7 L0 15Z" fill="#2b579a"/><text x="4.6" y="11.5" font-size="7.5" font-weight="bold" fill="#fff" text-anchor="middle" font-family="Liberation Sans">W</text></svg>
<!-- notepad -->
<svg class="a" style="left:714px;top:777px" width="16" height="17" viewBox="0 0 16 17"><path d="M2 2 L14 2 L13 16 L1 16Z" fill="#b8d8e8"/><path d="M3 5h9M3 8h9M2.8 11h9M2.6 14h9" stroke="#7aa0b0" stroke-width="0.8"/><path d="M3 0.5v3M6 0.5v3M9 0.5v3M12 0.5v3" stroke="#e8e8e8" stroke-width="1"/></svg>
<!-- paint -->
<svg class="a" style="left:750px;top:776px" width="18" height="17" viewBox="0 0 18 17"><path d="M1 10 Q0 4 7 3 Q13 3 12 8 Q11 10 9 10 Q8 12 9 14 Q5 16 2 13Z" fill="#e8e0d0"/><circle cx="4" cy="7" r="1.6" fill="#3a8ad8"/><circle cx="7.5" cy="5.5" r="1.5" fill="#e84040"/><circle cx="4" cy="11" r="1.5" fill="#40b040"/><circle cx="9.5" cy="7.5" r="1.2" fill="#f0c020"/><path d="M15 1 L13.5 14" stroke="#e8a040" stroke-width="1.6"/><path d="M14 0 L16 0 L15.5 3 L14.3 3Z" fill="#d0d0d0"/></svg>
<!-- Ai -->
<svg class="a" style="left:788px;top:777px" width="16" height="16" viewBox="0 0 16 16"><rect width="16" height="16" fill="#2a0a00"/><rect x="0.5" y="0.5" width="15" height="15" fill="none" stroke="#e87838"/><text x="8" y="11.5" font-size="9" fill="#f08848" text-anchor="middle" font-family="Liberation Sans">Ai</text></svg>
<!-- pig -->
<svg class="a" style="left:825px;top:778px" width="15" height="14" viewBox="0 0 15 14"><ellipse cx="7.5" cy="7.5" rx="7" ry="6" fill="#f0c8b0"/><ellipse cx="7.5" cy="9" rx="2.5" ry="1.6" fill="#d89080"/><circle cx="5" cy="6" r="0.8" fill="#604030"/><circle cx="10" cy="6" r="0.8" fill="#604030"/></svg>
<!-- remote -->
<svg class="a" style="left:862px;top:778px" width="16" height="14" viewBox="0 0 16 14"><rect x="0.5" y="0.5" width="15" height="12" fill="#a8d8f0" stroke="#4a90c0"/><rect x="2.5" y="3" width="4" height="5" fill="#2a70a8"/><rect x="8" y="3" width="6" height="2" fill="#2a70a8"/><rect x="8" y="6" width="6" height="2" fill="#5aa0d0"/><rect x="2" y="10" width="12" height="1" fill="#2a70a8"/></svg>
<!-- comp mgmt active -->
<svg class="a" style="left:898px;top:777px" width="17" height="17" viewBox="0 0 17 17"><rect x="4.5" y="1.5" width="12" height="10" fill="#e4e8f0" stroke="#b0b8c4"/><rect x="6" y="3" width="9.5" height="7" fill="url(#scr)"/><path d="M7 4 L10 4 L11 9 L8 10 L6 12 L5 11 L7.5 9Z" fill="#14146e"/><rect x="1" y="5.5" width="3.5" height="8" fill="#d0d0d0" stroke="#9a9a9a" stroke-width="0.6"/><rect x="1" y="12.5" width="13" height="4" fill="#5e6464"/><rect x="2.5" y="14" width="1.5" height="1.2" fill="#e0e0e0"/><rect x="5.5" y="14" width="1.5" height="1.2" fill="#e0e0e0"/><rect x="8.5" y="14" width="1.5" height="1.2" fill="#e0e0e0"/><rect x="11" y="14" width="1.5" height="1.2" fill="#e0e0e0"/></svg>
<!-- tray -->
<svg class="a" style="left:1008px;top:780px" width="12" height="8" viewBox="0 0 12 8"><path d="M0.7 7.3 L6 1.5 L11.3 7.3" fill="none" stroke="#fff" stroke-width="1.2"/></svg>
<svg class="a" style="left:1029px;top:777px" width="17" height="15" viewBox="0 0 17 15"><rect x="4.5" y="5.5" width="11" height="7" fill="none" stroke="#fff"/><rect x="15.5" y="7.5" width="1.5" height="3" fill="#fff"/><rect x="5.5" y="6.5" width="7" height="5" fill="#fff"/><path d="M2 1v4M5 1v4M0.5 5h6v2l-2.5 2v3" fill="none" stroke="#fff" stroke-width="1.1"/></svg>
<svg class="a" style="left:1056px;top:778px" width="14" height="14" viewBox="0 0 14 14"><path d="M1 13 A12 12 0 0 1 13 1M3.5 13 A9.5 9.5 0 0 1 13 3.5M6 13 A7 7 0 0 1 13 6M8.5 13 A4.5 4.5 0 0 1 13 8.5" fill="none" stroke="#fff" stroke-width="1"/><circle cx="12" cy="12" r="1.5" fill="#fff"/></svg>
<svg class="a" style="left:1078px;top:778px" width="15" height="14" viewBox="0 0 15 14"><path d="M0.5 4.5 L3 4.5 L7 1 L7 13 L3 9.5 L0.5 9.5Z" fill="none" stroke="#fff" stroke-width="1"/><path d="M9 5 L14 10M14 5 L9 10" stroke="#fff" stroke-width="1"/></svg>
<svg class="a" style="left:1103px;top:776px" width="15" height="17" viewBox="0 0 15 17"><path d="M7.5 0.5 L14.5 2.5 L14 10 Q12 14.5 7.5 16.5 Q3 14.5 1 10 L0.5 2.5Z" fill="#e8e8e8"/><path d="M7.5 1.8 L13.3 3.4 L12.8 9.8 Q11 13.5 7.5 15.2 Q4 13.5 2.2 9.8 L1.7 3.4Z" fill="#d8242c"/><text x="7.5" y="12" font-size="9" font-weight="bold" fill="#fff" text-anchor="middle" font-family="Liberation Sans">G</text></svg>
<div class="t" style="left:1130px;top:777px;color:#fff;font-size:12px;transform:scaleX(0.8);transform-origin:0 0;-webkit-text-stroke:0">ESP</div>
<div class="t" style="left:1167px;top:777px;color:#fff;font-size:12px;letter-spacing:-0.2px;-webkit-text-stroke:0">4:03 p. m.</div>
<svg class="a" style="left:1239px;top:777px" width="17" height="17" viewBox="0 0 17 17"><path d="M0.5 0.5 L16 0.5 L16 12 L10 12 L8 14.5 L6 12 L0.5 12Z" fill="#fff"/><path d="M3 3.5h10M3 6h10M3 8.5h7" stroke="#05080e" stroke-width="1"/></svg>
<div class="a" style="left:1275px;top:770px;width:1px;height:30px;background:#5a5a5a"></div>
</body></html>
